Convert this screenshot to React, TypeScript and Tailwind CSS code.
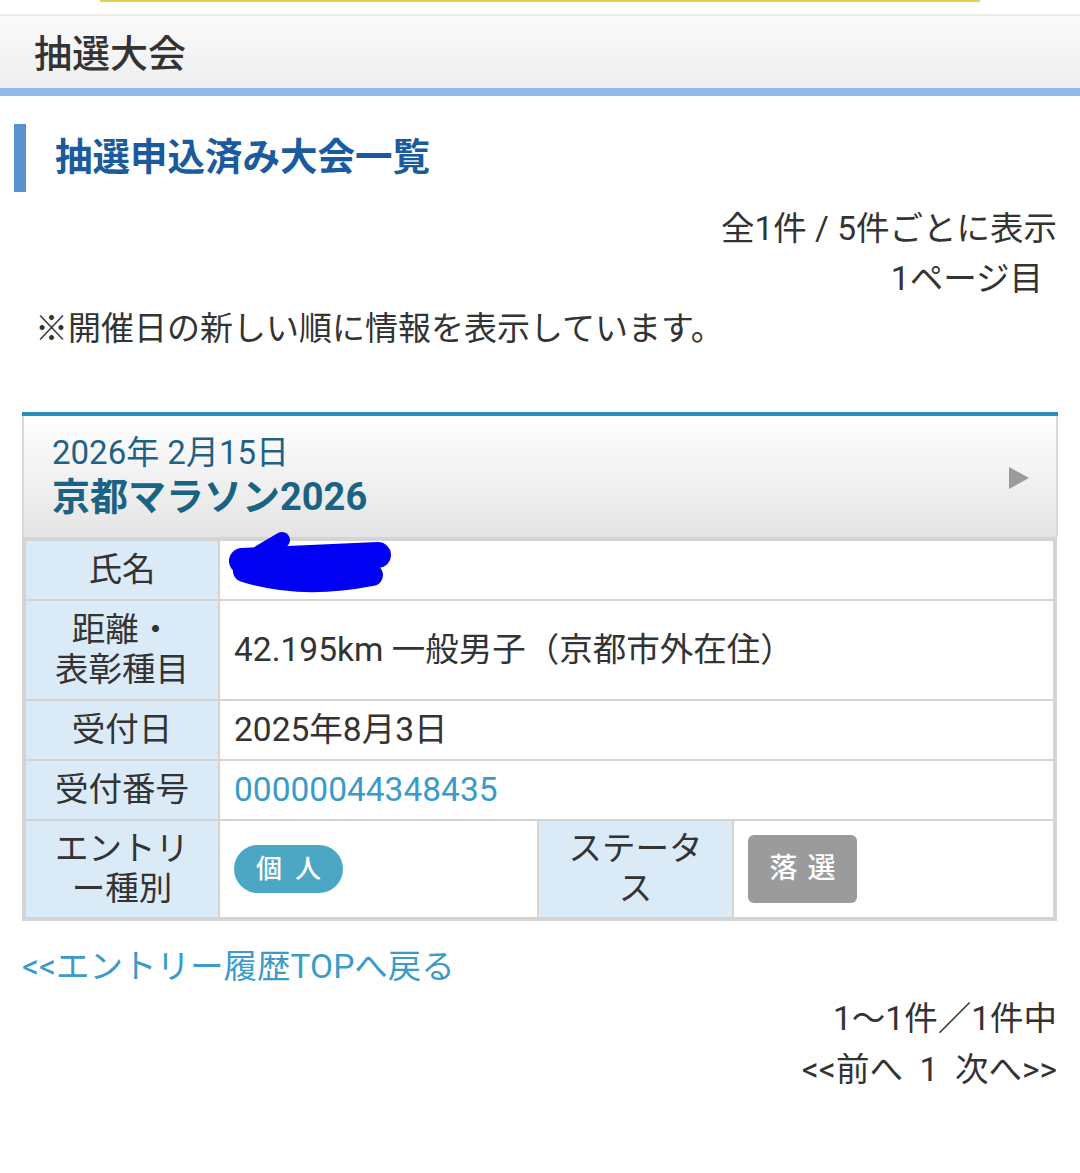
const font = { fontFamily: 'Roboto, "Noto Sans CJK JP", sans-serif' };

function Label({ children }: { children: React.ReactNode }) {
  return (
    <td className="bg-[#dbeaf7] border-2 border-[#d4d4d4] text-center align-middle py-[8px] text-[33.5px] leading-[40px] text-[#333]">
      {children}
    </td>
  );
}

function Value({ children, span }: { children: React.ReactNode; span?: number }) {
  return (
    <td
      colSpan={span}
      className="relative bg-white border-2 border-[#d4d4d4] align-middle pl-[14px] py-[8px] text-[33.5px] leading-[40px] text-[#333]"
    >
      {children}
    </td>
  );
}

export default function App() {
  return (
    <div className="w-[1080px] min-h-[1173px] bg-white text-[#333]" style={font}>
      {/* 上部のライン */}
      <div className="h-[14px]">
        <div className="ml-[100px] w-[880px] h-[2px] bg-[#e6cd55]" />
      </div>
      <div className="h-[2px] bg-[#ececec]" />
      <header className="h-[72px] flex items-center pl-[34px] pt-[3px] bg-gradient-to-b from-[#fbfbfb] to-[#eeeeee]">
        <h1 className="text-[38px] leading-none font-medium text-[#333]">抽選大会</h1>
      </header>
      <div className="h-[8px] bg-[#94b9e9]" />

      {/* 見出し */}
      <div className="mt-[28px] ml-[14px] flex items-center h-[68px] border-l-[12px] border-[#5a91d4]">
        <h2 className="pl-[29px] text-[37.5px] leading-none font-bold text-[#1b5a9c]">抽選申込済み大会一覧</h2>
      </div>

      <div className="mt-[12px] text-[33.5px] leading-[50px]">
        <div className="text-right pr-[23px]">全1件 / 5件ごとに表示</div>
        <div className="text-right pr-[37px]">1ページ目</div>
        <div className="pl-[35px] text-[33px]">※開催日の新しい順に情報を表示しています。</div>
      </div>

      {/* カード */}
      <div className="mt-[58px] mx-[22px]">
        <div className="border-t-4 border-[#2b8bb9]">
          <div className="h-[121px] flex items-center justify-between border-x-2 border-[#dadada] bg-gradient-to-b from-white to-[#e4e4e4] pl-[28px] pr-[26px]">
            <div>
              <div className="text-[33px] leading-[40px] text-[#1f6186]">2026年 2月15日</div>
              <div className="text-[38px] leading-[48px] font-bold text-[#1a6384]">京都マラソン2026</div>
            </div>
            <svg width="22" height="24" viewBox="0 0 22 24" className="mt-[2px]">
              <polygon points="1,1 21,12 1,23" fill="#9b9b9b" />
            </svg>
          </div>
        </div>

        <table className="w-[1035px] border-collapse border-4 border-[#d4d4d4] table-fixed">
          <colgroup>
            <col className="w-[195px]" />
            <col className="w-[319px]" />
            <col className="w-[195px]" />
            <col />
          </colgroup>
          <tbody>
            <tr className="h-[61px]">
              <Label>氏名</Label>
              <Value span={3}>
                <svg width="175" height="70" viewBox="0 0 175 70" className="absolute left-0 top-[-10px]">
                  <g stroke="#0000f2" strokeLinecap="round" strokeLinejoin="round" fill="none">
                    <path d="M22 30 L 158 24" strokeWidth="26" />
                    <path d="M24 40 Q 80 58 152 44" strokeWidth="22" />
                    <path d="M40 22 L 62 9" strokeWidth="16" />
                    <path d="M150 20 L 160 22" strokeWidth="12" />
                  </g>
                </svg>
              </Value>
            </tr>
            <tr className="h-[100px]">
              <Label>
                距離・
                <br />
                表彰種目
              </Label>
              <Value span={3}>42.195km 一般男子（京都市外在住）</Value>
            </tr>
            <tr className="h-[60px]">
              <Label>受付日</Label>
              <Value span={3}>2025年8月3日</Value>
            </tr>
            <tr className="h-[60px]">
              <Label>受付番号</Label>
              <Value span={3}>
                <span className="text-[#3a9bc9]">00000044348435</span>
              </Value>
            </tr>
            <tr className="h-[99px]">
              <Label>
                エントリ
                <br />
                ー種別
              </Label>
              <Value>
                <span className="inline-flex items-center justify-center gap-[13px] w-[109px] h-[48px] rounded-full bg-[#4ba7c3] text-white text-[26px] leading-none font-medium">
                  <span>個</span>
                  <span>人</span>
                </span>
              </Value>
              <Label>
                ステータ
                <br />
                ス
              </Label>
              <Value>
                <span className="inline-flex items-center justify-center gap-[10px] w-[109px] h-[68px] rounded-[6px] bg-[#9b9b9b] text-white text-[28px] leading-none font-medium mt-[-1px]">
                  <span>落</span>
                  <span>選</span>
                </span>
              </Value>
            </tr>
          </tbody>
        </table>
      </div>

      <div className="mt-[26px] pl-[22px] text-[33.5px] leading-[40px] text-[#3a9bc9]">&lt;&lt;エントリー履歴TOPへ戻る</div>

      <div className="mt-[6px] pr-[23px] text-right text-[33.5px] leading-[51px]">
        <div>1〜1件／1件中</div>
        <div>&lt;&lt;前へ&nbsp; 1 &nbsp;次へ&gt;&gt;</div>
      </div>
    </div>
  );
}
